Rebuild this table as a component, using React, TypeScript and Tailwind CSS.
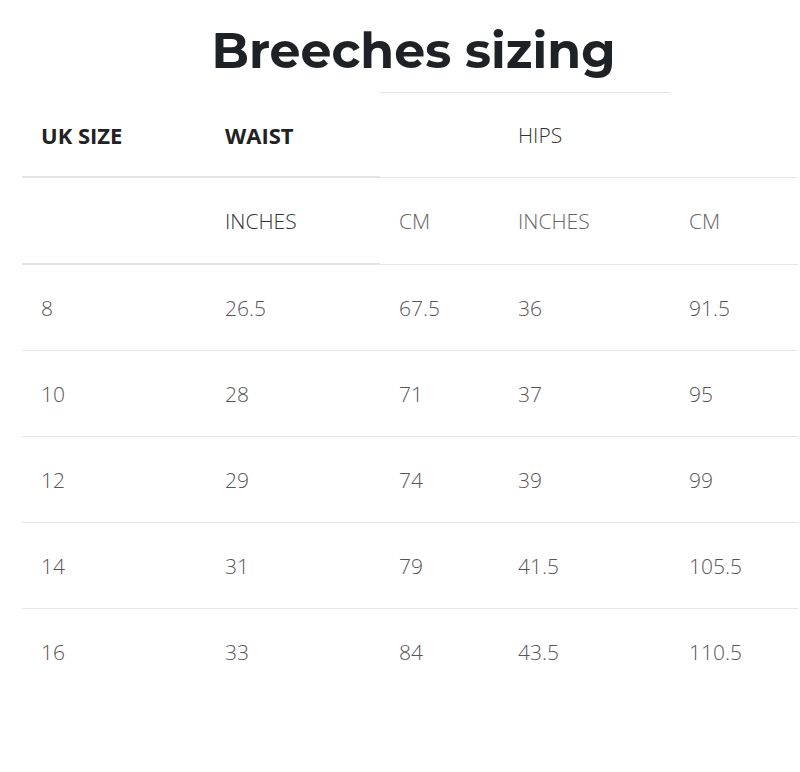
const rows = [
  ["8", "26.5", "67.5", "36", "91.5"],
  ["10", "28", "71", "37", "95"],
  ["12", "29", "74", "39", "99"],
  ["14", "31", "79", "41.5", "105.5"],
  ["16", "33", "84", "43.5", "110.5"],
];

const cols = "grid grid-cols-[184px_174px_119px_171px_128px]";

const App = () => {
  return (
    <div className="w-[800px] h-[772px] bg-white font-['Open_Sans',sans-serif] overflow-hidden">
      <h1 className="pt-[19px] pl-[27px] text-center font-['Montserrat','Inter',sans-serif] text-[49px] font-bold leading-[64px] text-[#1e2226]">
        Breeches sizing
      </h1>

      <div className="ml-[22px] mt-[9px] w-[776px]">
        {/* header row */}
        <div className={`${cols} h-[86px]`}>
          <div className="flex items-center pl-[19px] pt-[2px] border-b-2 border-[#e4e4e4] text-[22px] font-bold text-[#222]">
            UK SIZE
          </div>
          <div className="flex items-center pl-[19px] pt-[2px] border-b-2 border-[#e4e4e4] text-[22px] font-bold text-[#222]">
            WAIST
          </div>
          <div className="border-t border-b border-[#e6e6e6]" />
          <div className="flex items-center pl-[19px] pt-[2px] border-t border-b border-[#e6e6e6] text-[21px] font-light text-[#333]">
            HIPS
          </div>
          <div className="border-b border-[#e6e6e6]" />
        </div>

        {/* units row */}
        <div className={`${cols} h-[87px] text-[21px] font-light text-[#444]`}>
          <div className="border-b-2 border-[#e4e4e4]" />
          <div className="flex items-center pl-[19px] pt-[2px] border-b-2 border-[#e4e4e4] text-[#333]">INCHES</div>
          <div className="flex items-center pl-[19px] pt-[2px] border-b border-[#e6e6e6] text-[#666]">CM</div>
          <div className="flex items-center pl-[19px] pt-[2px] border-b border-[#e6e6e6] text-[#666]">INCHES</div>
          <div className="flex items-center pl-[19px] pt-[2px] border-b border-[#e6e6e6] text-[#666]">CM</div>
        </div>

        {rows.map((row, i) => (
          <div
            key={i}
            className={`${cols} h-[86px] text-[21px] font-light text-[#555] ${
              i < rows.length - 1 ? "border-b border-[#e6e6e6]" : ""
            }`}
          >
            {row.map((cell, j) => (
              <div key={j} className="flex items-center pl-[19px] pt-[2px]">
                {cell}
              </div>
            ))}
          </div>
        ))}
      </div>
    </div>
  );
};

export default App;
